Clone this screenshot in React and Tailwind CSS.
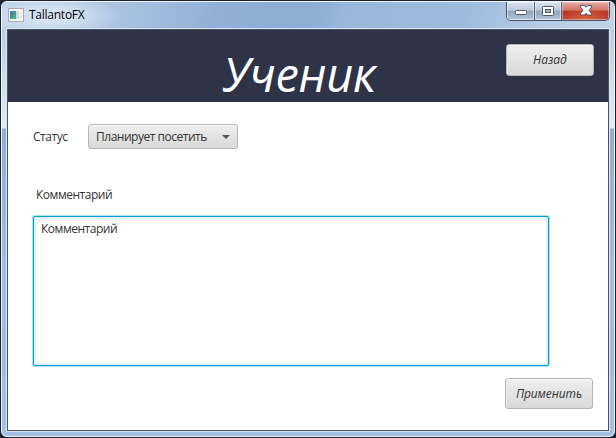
import React from "react";

const font = "font-['Open_Sans','Noto_Sans',sans-serif]";

function AppIcon() {
  return (
    <svg width="16" height="14" viewBox="0 0 16 14" className="shrink-0">
      <defs>
        <linearGradient id="pane" x1="0" y1="0" x2="1" y2="1">
          <stop offset="0" stopColor="#3d78a8" />
          <stop offset="1" stopColor="#55b87c" />
        </linearGradient>
      </defs>
      <rect x=".5" y=".5" width="15" height="13" fill="#f4f6f6" stroke="#a6aab2" />
      <rect x="2" y="3" width="6" height="8" fill="url(#pane)" />
      <rect x="8" y="3" width="3" height="8" fill="#d5dad9" />
      <rect x="12" y="3" width="2" height="8" fill="#e9eceb" />
    </svg>
  );
}

function Caption() {
  return (
    <div className="flex h-[19px] w-[104px] shrink-0 overflow-hidden rounded-b-[5px] border border-t-0 border-[#45536b]">
      <div className="flex w-[28px] items-center justify-center border-r border-[#526078] bg-[linear-gradient(180deg,#d8e1ed_0%,#bdcbdc_46%,#91a4bc_50%,#b5c7dc_100%)] shadow-[inset_0_0_0_1px_rgba(255,255,255,0.5)]">
        <svg width="12" height="6" viewBox="0 0 12 6" className="mt-[4px]">
          <rect x=".5" y=".5" width="11" height="4" rx="1" fill="#fff" stroke="#50566b" />
        </svg>
      </div>
      <div className="flex w-[27px] items-center justify-center border-r border-[#526078] bg-[linear-gradient(180deg,#d8e1ed_0%,#bdcbdc_46%,#91a4bc_50%,#b5c7dc_100%)] shadow-[inset_0_0_0_1px_rgba(255,255,255,0.5)]">
        <svg width="12" height="10" viewBox="0 0 12 10" className="-mt-px">
          <rect x=".5" y=".5" width="11" height="9" rx="1" fill="#fff" stroke="#50566b" />
          <rect x="3.5" y="3.5" width="5" height="3" fill="#a8b8cc" stroke="#50566b" />
        </svg>
      </div>
      <div className="flex flex-1 items-center justify-center bg-[radial-gradient(ellipse_at_50%_100%,rgba(235,110,65,0.65),transparent_65%),linear-gradient(180deg,#e3aaa0_0%,#cf7567_46%,#b63321_50%,#b84c38_100%)] shadow-[inset_0_0_0_1px_rgba(255,220,210,0.5)]">
        <svg width="12" height="11" viewBox="0 0 12 11" className="-mt-px">
          <path d="M.5.5h4L6 2.300 7.500.5h4v1.600L9 5.300l2.500 3.100V10h-4L6 8.200 4.500 10h-4V8.400L3 5.300.5 2.100z" fill="#fff" stroke="#51556a" strokeLinejoin="round" />
        </svg>
      </div>
    </div>
  );
}

function Button({ children, className }) {
  return (
    <button className={"flex shrink-0 items-center justify-center rounded-[3px] border border-[#b5b5b5] bg-linear-to-b from-[#efefef] to-[#d9d9d9] text-[12px] italic leading-4 text-[#333] shadow-[inset_0_1px_0_#fafafa,inset_1px_0_0_#ededed] " + className}>
      {children}
    </button>
  );
}

export default function App() {
  return (
    <div className={"h-[438px] w-[616px] overflow-hidden bg-[#20212c] " + font}>
      <div className="flex h-full w-full flex-col overflow-hidden rounded-[7px] border border-[#20212c] bg-[#9fbde0]">
        <div className="flex min-h-0 flex-1 flex-col rounded-[6px] border border-[#edf4fb] bg-[linear-gradient(180deg,transparent_25px,#b9cfe8_26px,#e2ebf6_126px,#8faed5_127px,#9dbce2_250px,#a3c0e6_100%)] px-[5px] pb-[5px]">
          <div className="-mx-[5px] flex h-[27px] shrink-0 justify-between rounded-t-[5px] bg-[radial-gradient(70px_20px_at_50px_14px,rgba(232,240,250,0.85)_0%,rgba(220,231,245,0.6)_50%,transparent_100%),linear-gradient(105deg,#bfd1e9_0%,#a9c2e1_20%,#92b0d7_35%,#8dadd5_49%,#91b1d9_53%,#98b7db_55%,#9cbbdd_75%,#b4cae5_87%,#c1d3e9_100%)] pl-[6px] pr-[4px]">
            <div className="flex items-center gap-[5px] pb-px">
              <AppIcon />
              <span className="text-[12px] leading-4 tracking-[-0.25px] text-black">TallantoFX</span>
            </div>
            <Caption />
          </div>
          <div className="flex min-h-0 flex-1 flex-col border border-[#495365] bg-white outline outline-[#d6e7ee]">
            <header className="flex h-[72px] shrink-0 justify-between bg-[#2f3347] pl-[215px] pr-[14px]">
              <h1 className="mt-[12px] text-[47px] italic leading-[64px] tracking-[-0.3px] text-white">Ученик</h1>
              <Button className="mt-[14px] h-8 w-[88px]">Назад</Button>
            </header>
            <main className="flex min-h-0 flex-1 flex-col pl-[25px] pr-[15px] pt-[22px] text-[12px] leading-4 text-[#333]">
              <div className="flex h-[25px] items-center">
                <label className="w-[55px] tracking-[-0.45px]">Статус</label>
                <div className="flex h-[25px] w-[150px] items-center justify-between rounded-[3px] border border-[#b5b5b5] bg-linear-to-b from-[#eeeeee] to-[#d9d9d9] pl-[7px] pr-[7px] shadow-[inset_0_1px_0_#fafafa]">
                  <span className="tracking-[-0.48px]">Планирует посетить</span>
                  <svg width="8" height="4" viewBox="0 0 8 4"><path d="M0 0h8L4 4z" fill="#555" /></svg>
                </div>
              </div>
              <label className="ml-[3px] mt-[38px] tracking-[-0.48px]">Комментарий</label>
              <div className="mt-[13px] h-[150px] w-[516px] shrink-0 rounded-[2px] border border-[#039ed3] bg-white px-[7px] py-[4px] tracking-[-0.48px] shadow-[0_0_0_1px_#a9e2f3,inset_0_0_0_2px_#e0f3f9,inset_0_3px_3px_#e4eff3]">Комментарий</div>
              <Button className="mt-[12px] h-[31px] w-[88px] self-end tracking-[-0.1px]">Применить</Button>
            </main>
          </div>
        </div>
      </div>
    </div>
  );
}
